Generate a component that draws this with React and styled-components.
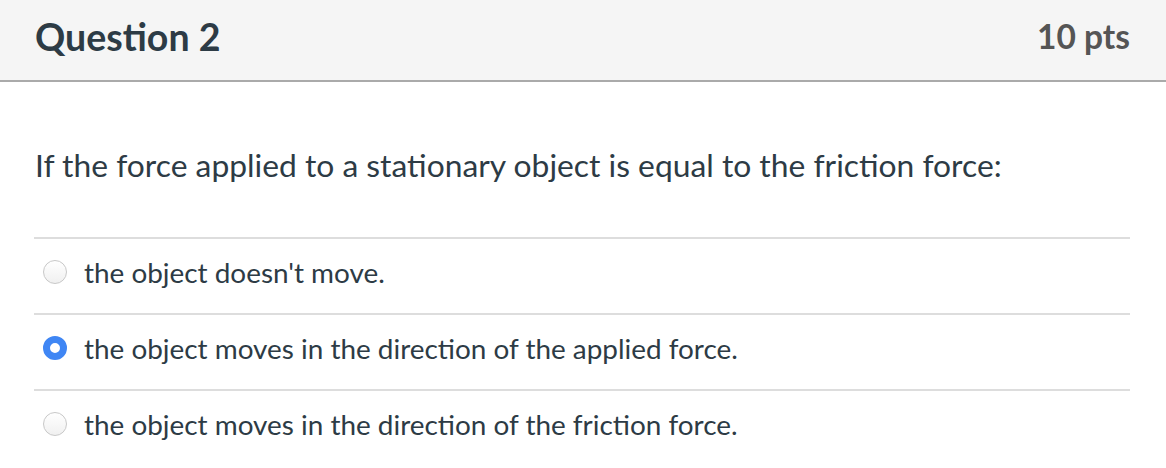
import styled, { createGlobalStyle } from 'styled-components';

const GlobalStyle = createGlobalStyle`
  body {
    margin: 0;
    background: #fff;
    font-family: Lato, "Liberation Sans", sans-serif;
  }
`;

const Wrapper = styled.div`
  width: 1166px;
  height: 468px;
  overflow: hidden;
  background: #fff;
`;

const Header = styled.div`
  height: 82px;
  background: #f5f5f5;
  border-bottom: 2px solid #aaaaaa;
  display: flex;
  align-items: center;
  justify-content: space-between;
  padding: 0 36px 8px 35px;
  box-sizing: border-box;
`;

const Title = styled.h2`
  margin: 0;
  font-size: 37.5px;
  font-weight: 700;
  color: #2d3b45;
`;

const Points = styled.span`
  font-size: 33.5px;
  font-weight: 700;
  color: #555555;
`;

const Body = styled.div`
  padding: 0 36px 0 34px;
`;

const QuestionText = styled.p`
  margin: 61px 0 50px 1px;
  font-size: 31.8px;
  line-height: 44px;
  color: #2d3b45;
`;

const Answer = styled.label`
  display: flex;
  align-items: center;
  gap: 17px;
  height: 76px;
  box-sizing: border-box;
  border-top: 2px solid #dddddd;
  padding: 0 0 8px 9px;
  font-size: 27.9px;
  color: #2d3b45;
`;

const Radio = styled.span`
  width: 24px;
  height: 24px;
  border-radius: 50%;
  box-sizing: border-box;
  flex-shrink: 0;
  border: ${({ checked }) => (checked ? '7px solid #3f86f4' : '1px solid #c8c8c8')};
  background: ${({ checked }) =>
    checked ? '#fff' : 'linear-gradient(#ffffff, #f0f0f0)'};
`;

const answers = [
  { id: 1, text: "the object doesn't move.", checked: false },
  { id: 2, text: 'the object moves in the direction of the applied force.', checked: true },
  { id: 3, text: 'the object moves in the direction of the friction force.', checked: false },
];

function App() {
  return (
    <Wrapper>
      <GlobalStyle />
      <Header>
        <Title>Question 2</Title>
        <Points>10 pts</Points>
      </Header>
      <Body>
        <QuestionText>
          If the force applied to a stationary object is equal to the friction force:
        </QuestionText>
        {answers.map((answer) => (
          <Answer key={answer.id}>
            <Radio checked={answer.checked} />
            {answer.text}
          </Answer>
        ))}
      </Body>
    </Wrapper>
  );
}

export default App;
